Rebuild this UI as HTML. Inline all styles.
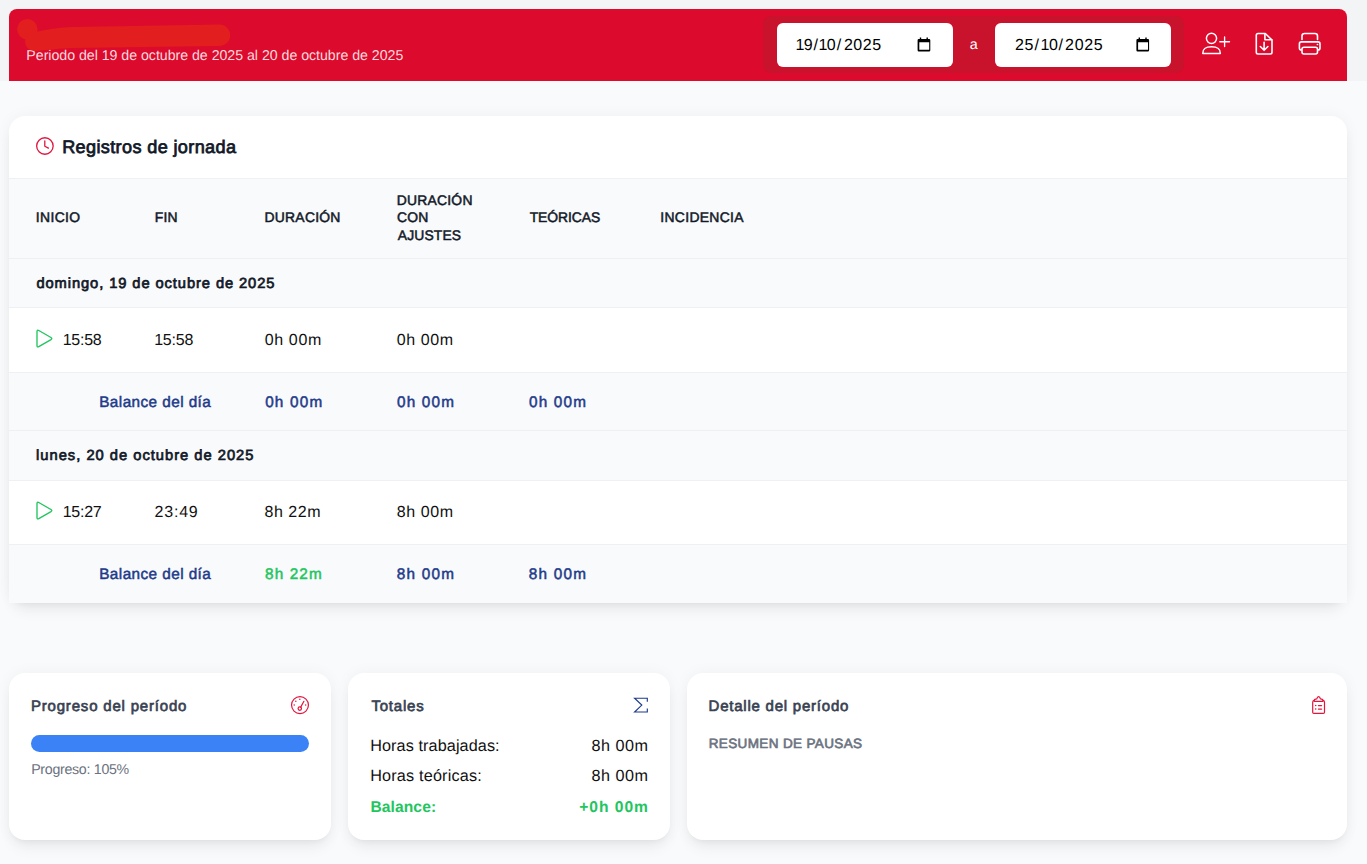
<!DOCTYPE html>
<html><head><meta charset="utf-8"><style>
*{margin:0;padding:0;box-sizing:border-box}
html,body{width:1367px;height:864px;overflow:hidden;background:#f9fafb;font-family:"Liberation Sans", sans-serif;position:relative}
.t{position:absolute;white-space:nowrap;line-height:1;font-family:"Liberation Sans", sans-serif;text-rendering:geometricPrecision}
.abs{position:absolute}
.ov{position:absolute;left:0;top:0;pointer-events:none}
.topband{position:absolute;left:0;top:0;width:1367px;height:81px;background:#f3f4f6}
.hdr{position:absolute;left:9px;top:9px;width:1338px;height:72px;background:#dc0a2d;border-radius:8px 8px 0 0}
.dc{position:absolute;left:763px;top:16px;width:421px;height:57px;background:#c9122b;border-radius:8px}
.inp{position:absolute;top:23px;width:176px;height:44px;background:#fff;border-radius:6px}
.card{position:absolute;background:#fff;border-radius:16px;box-shadow:0 0 16px rgba(0,0,0,.045),0 10px 15px -3px rgba(0,0,0,.06),0 4px 6px -4px rgba(0,0,0,.06)}
.row{position:absolute;left:9px;width:1338px}
.g{background:#f9fafb}
.b{position:absolute;left:9px;width:1338px;height:1px;background:#eef0f3}
.bar{position:absolute;left:31px;top:735px;width:278px;height:17px;background:#3b82f6;border-radius:9px}
</style></head><body>
<div class="topband"></div>
<div class="hdr"></div>
<div class="dc"></div>
<div class="inp" style="left:777px"></div>
<div class="inp" style="left:995px"></div>
<div class="card" style="left:9px;top:116px;width:1338px;height:487px"></div>
<div class="row g" style="top:179px;height:79px"></div>
<div class="row g" style="top:259px;height:48px"></div>
<div class="row g" style="top:373px;height:57px"></div>
<div class="row g" style="top:431px;height:49px"></div>
<div class="row g" style="top:545px;height:58px"></div>
<div class="b" style="top:178px"></div>
<div class="b" style="top:258px"></div>
<div class="b" style="top:307px"></div>
<div class="b" style="top:372px"></div>
<div class="b" style="top:430px"></div>
<div class="b" style="top:480px"></div>
<div class="b" style="top:544px"></div>
<div class="card" style="left:9px;top:673px;width:322px;height:167px"></div>
<div class="card" style="left:348px;top:673px;width:322px;height:167px"></div>
<div class="card" style="left:687px;top:673px;width:660px;height:167px"></div>
<div class="bar"></div>
<div class="t" style="left:26.36px;top:49px;font-size:14.2px;font-weight:400;color:#fcdade;letter-spacing:-0.030px">Periodo del 19 de octubre de 2025 al 20 de octubre de 2025</div>
<div class="t" style="left:795.40px;top:38px;font-size:16.0px;font-weight:400;color:#000;letter-spacing:-0.640px">19</div>
<div class="t" style="left:813.40px;top:38px;font-size:16.0px;font-weight:400;color:#000;letter-spacing:0.000px">/</div>
<div class="t" style="left:818.45px;top:38px;font-size:16.0px;font-weight:400;color:#000;letter-spacing:-0.500px">10</div>
<div class="t" style="left:836.80px;top:38px;font-size:16.0px;font-weight:400;color:#000;letter-spacing:0.000px">/</div>
<div class="t" style="left:843.90px;top:38px;font-size:16.0px;font-weight:400;color:#000;letter-spacing:0.580px">2025</div>
<div class="t" style="left:1015.00px;top:38px;font-size:16.0px;font-weight:400;color:#000;letter-spacing:0.680px">25</div>
<div class="t" style="left:1034.60px;top:38px;font-size:16.0px;font-weight:400;color:#000;letter-spacing:0.000px">/</div>
<div class="t" style="left:1040.60px;top:38px;font-size:16.0px;font-weight:400;color:#000;letter-spacing:-0.500px">10</div>
<div class="t" style="left:1058.60px;top:38px;font-size:16.0px;font-weight:400;color:#000;letter-spacing:0.000px">/</div>
<div class="t" style="left:1065.10px;top:38px;font-size:16.0px;font-weight:400;color:#000;letter-spacing:0.647px">2025</div>
<div class="t" style="left:969.82px;top:38px;font-size:14.4px;font-weight:400;color:#ffffff;letter-spacing:0.000px">a</div>
<div class="t" style="left:62.13px;top:138px;font-size:18.1px;font-weight:400;color:#111827;letter-spacing:0.364px;-webkit-text-stroke:0.75px #111827">Registros de jornada</div>
<div class="t" style="left:35.80px;top:211px;font-size:13.9px;font-weight:400;color:#111827;letter-spacing:0.382px;-webkit-text-stroke:0.5px #111827">INICIO</div>
<div class="t" style="left:154.74px;top:211px;font-size:13.9px;font-weight:400;color:#111827;letter-spacing:0.272px;-webkit-text-stroke:0.5px #111827">FIN</div>
<div class="t" style="left:264.54px;top:211px;font-size:13.9px;font-weight:400;color:#111827;letter-spacing:0.248px;-webkit-text-stroke:0.5px #111827">DURACIÓN</div>
<div class="t" style="left:396.64px;top:194px;font-size:13.9px;font-weight:400;color:#111827;letter-spacing:0.248px;-webkit-text-stroke:0.5px #111827">DURACIÓN</div>
<div class="t" style="left:397.06px;top:211px;font-size:13.9px;font-weight:400;color:#111827;letter-spacing:0.124px;-webkit-text-stroke:0.5px #111827">CON</div>
<div class="t" style="left:397.75px;top:229px;font-size:13.9px;font-weight:400;color:#111827;letter-spacing:0.129px;-webkit-text-stroke:0.5px #111827">AJUSTES</div>
<div class="t" style="left:529.67px;top:211px;font-size:13.9px;font-weight:400;color:#111827;letter-spacing:-0.061px;-webkit-text-stroke:0.5px #111827">TEÓRICAS</div>
<div class="t" style="left:660.30px;top:211px;font-size:13.9px;font-weight:400;color:#111827;letter-spacing:0.331px;-webkit-text-stroke:0.5px #111827">INCIDENCIA</div>
<div class="t" style="left:36.46px;top:277px;font-size:14.7px;font-weight:400;color:#111827;letter-spacing:0.914px;-webkit-text-stroke:0.7px #111827">domingo, 19 de octubre de 2025</div>
<div class="t" style="left:62.70px;top:333px;font-size:16.0px;font-weight:400;color:#111111;letter-spacing:-0.240px">15:58</div>
<div class="t" style="left:154.20px;top:333px;font-size:16.0px;font-weight:400;color:#111111;letter-spacing:-0.215px">15:58</div>
<div class="t" style="left:264.66px;top:333px;font-size:16.0px;font-weight:400;color:#111111;letter-spacing:0.648px">0h 00m</div>
<div class="t" style="left:396.86px;top:333px;font-size:16.0px;font-weight:400;color:#111111;letter-spacing:0.588px">0h 00m</div>
<div class="t" style="left:99.23px;top:395px;font-size:15.3px;font-weight:400;color:#1e3a8a;letter-spacing:0.438px;-webkit-text-stroke:0.5px #1e3a8a">Balance del día</div>
<div class="t" style="left:265.14px;top:395px;font-size:15.3px;font-weight:400;color:#1e3a8a;letter-spacing:1.221px;-webkit-text-stroke:0.5px #1e3a8a">0h 00m</div>
<div class="t" style="left:396.94px;top:395px;font-size:15.3px;font-weight:400;color:#1e3a8a;letter-spacing:1.221px;-webkit-text-stroke:0.5px #1e3a8a">0h 00m</div>
<div class="t" style="left:528.94px;top:395px;font-size:15.3px;font-weight:400;color:#1e3a8a;letter-spacing:1.221px;-webkit-text-stroke:0.5px #1e3a8a">0h 00m</div>
<div class="t" style="left:36.09px;top:449px;font-size:14.7px;font-weight:400;color:#111827;letter-spacing:1.004px;-webkit-text-stroke:0.7px #111827">lunes, 20 de octubre de 2025</div>
<div class="t" style="left:62.70px;top:505px;font-size:16.0px;font-weight:400;color:#111111;letter-spacing:-0.250px">15:27</div>
<div class="t" style="left:154.60px;top:505px;font-size:16.0px;font-weight:400;color:#111111;letter-spacing:0.780px">23:49</div>
<div class="t" style="left:264.58px;top:505px;font-size:16.0px;font-weight:400;color:#111111;letter-spacing:0.504px">8h 22m</div>
<div class="t" style="left:396.78px;top:505px;font-size:16.0px;font-weight:400;color:#111111;letter-spacing:0.604px">8h 00m</div>
<div class="t" style="left:99.23px;top:567px;font-size:15.3px;font-weight:400;color:#1e3a8a;letter-spacing:0.438px;-webkit-text-stroke:0.5px #1e3a8a">Balance del día</div>
<div class="t" style="left:265.06px;top:567px;font-size:15.3px;font-weight:400;color:#22c55e;letter-spacing:1.116px;-webkit-text-stroke:0.5px #22c55e">8h 22m</div>
<div class="t" style="left:396.86px;top:567px;font-size:15.3px;font-weight:400;color:#1e3a8a;letter-spacing:1.236px;-webkit-text-stroke:0.5px #1e3a8a">8h 00m</div>
<div class="t" style="left:528.86px;top:567px;font-size:15.3px;font-weight:400;color:#1e3a8a;letter-spacing:1.236px;-webkit-text-stroke:0.5px #1e3a8a">8h 00m</div>
<div class="t" style="left:30.93px;top:699px;font-size:15.0px;font-weight:400;color:#374151;letter-spacing:0.813px;-webkit-text-stroke:0.65px #374151">Progreso del período</div>
<div class="t" style="left:31.16px;top:763px;font-size:14.2px;font-weight:400;color:#6b7280;letter-spacing:-0.283px">Progreso: 105%</div>
<div class="t" style="left:371.42px;top:699px;font-size:15.0px;font-weight:400;color:#374151;letter-spacing:0.804px;-webkit-text-stroke:0.65px #374151">Totales</div>
<div class="t" style="left:370.20px;top:738px;font-size:16.2px;font-weight:400;color:#111111;letter-spacing:0.102px">Horas trabajadas:</div>
<div class="t" style="left:591.47px;top:738px;font-size:16.2px;font-weight:400;color:#111111;letter-spacing:0.495px">8h 00m</div>
<div class="t" style="left:370.20px;top:768px;font-size:16.2px;font-weight:400;color:#111111;letter-spacing:0.192px">Horas teóricas:</div>
<div class="t" style="left:591.47px;top:768px;font-size:16.2px;font-weight:400;color:#111111;letter-spacing:0.495px">8h 00m</div>
<div class="t" style="left:370.39px;top:800px;font-size:15.6px;font-weight:700;color:#22c55e;letter-spacing:0.103px">Balance:</div>
<div class="t" style="left:579.28px;top:800px;font-size:15.6px;font-weight:700;color:#22c55e;letter-spacing:0.965px">+0h 00m</div>
<div class="t" style="left:708.62px;top:699px;font-size:15.0px;font-weight:400;color:#374151;letter-spacing:0.768px;-webkit-text-stroke:0.65px #374151">Detalle del período</div>
<div class="t" style="left:708.75px;top:737px;font-size:13.5px;font-weight:400;color:#6b7280;letter-spacing:0.359px;-webkit-text-stroke:0.65px #6b7280">RESUMEN DE PAUSAS</div>

<svg class="ov" width="1367" height="864" viewBox="0 0 1367 864" fill="none" stroke-linecap="round" stroke-linejoin="round">
 <!-- scribble -->
 <g stroke="#e31e1e" fill="#e31e1e">
  <circle cx="27.3" cy="29.3" r="10.2" stroke="none"/>
  <path stroke="none" d="M34.5 32 C50 29 60 27.2 72 26.9 L219.5 24.6 A10.7 10.7 0 0 1 219.5 46 L72 48 C60 48.5 50 49.8 34.5 51 A9.5 9.5 0 0 1 34.5 32 Z"/>
 </g>
 <!-- user plus -->
 <g stroke="#fff" stroke-width="1.5">
  <circle cx="1211.5" cy="38.3" r="5.1"/>
  <path d="M1202.75 53.5 C1202.75 48 1206 46.75 1211.5 46.75 C1217 46.75 1220.35 48 1220.35 53.5 Z"/>
  <path d="M1219.8 41.7 H1229.5 M1224.6 37 V46.5" stroke-width="1.35"/>
 </g>
 <!-- file down -->
 <g stroke="#fff" stroke-width="1.6">
  <path d="M1265.3 33.5 H1258 Q1256.3 33.5 1256.3 35.2 V52.3 Q1256.3 54 1258 54 H1270.3 Q1272 54 1272 52.3 V40 Z"/>
  <path d="M1264.9 33.8 V39.8 H1271.8"/>
  <path d="M1264.1 42.3 V50.3 M1260.3 46.5 L1264.1 50.3 L1267.9 46.5"/>
 </g>
 <!-- printer -->
 <g stroke="#fff" stroke-width="1.6">
  <path d="M1302 39.5 V36 Q1302 33.5 1304.5 33.5 H1315 Q1317.5 33.5 1317.5 36 V39.5"/>
  <path d="M1301.2 49.9 H1301.4 Q1299.4 49.9 1299.4 47.9 V43.9 Q1299.4 41.9 1301.4 41.9 H1318 Q1320 41.9 1320 43.9 V47.9 Q1320 49.9 1318 49.9 H1318.2"/>
  <path d="M1304 47.2 H1315.5 Q1317.5 47.2 1317.5 49.2 V52 Q1317.5 54 1315.5 54 H1304 Q1302 54 1302 52 V49.2 Q1302 47.2 1304 47.2 Z"/>
  <circle cx="1317.3" cy="44.5" r="0.4" stroke-width="1"/>
 </g>
 <!-- calendar icons (chrome picker) -->
 <g fill="#000" stroke="none">
  <path d="M919.8 37.5 h1.4 v1.5 h5.3 v-1.5 h1.4 v1.5 h1.2 q1.2 0 1.2 1.2 v10 q0 1.3 -1.2 1.3 h-10.3 q-1.2 0 -1.2 -1.3 v-10 q0 -1.2 1.2 -1.2 h1 z M919.3 42.3 v7.5 h9.9 v-7.5 z"/>
  <path d="M1138.6 37.5 h1.4 v1.5 h5.3 v-1.5 h1.4 v1.5 h1.2 q1.2 0 1.2 1.2 v10 q0 1.3 -1.2 1.3 h-10.3 q-1.2 0 -1.2 -1.3 v-10 q0 -1.2 1.2 -1.2 h1 z M1138.1 42.3 v7.5 h9.9 v-7.5 z"/>
 </g>
 <!-- clock -->
 <g stroke="#e0163e" stroke-width="1.3">
  <circle cx="44.9" cy="146" r="8.25"/>
  <path d="M44.8 141 V146.2 L48.4 148.1"/>
 </g>
 <!-- play icons -->
 <g stroke="#22c55e" stroke-width="1.35">
  <path d="M37 331.6 Q37 329.6 38.8 330.5 L51 337.5 Q52.6 338.6 51 339.6 L38.8 346.6 Q37 347.6 37 345.6 Z"/>
  <path transform="translate(0,172)" d="M37 331.6 Q37 329.6 38.8 330.5 L51 337.5 Q52.6 338.6 51 339.6 L38.8 346.6 Q37 347.6 37 345.6 Z"/>
 </g>
 <!-- gauge -->
 <g stroke="#e0163e" stroke-width="1.2">
  <circle cx="300" cy="705.1" r="8.45"/>
  <circle cx="299.8" cy="708.6" r="1.7"/>
  <path d="M300.7 707.1 L303.9 701.3"/>
 </g>
 <g fill="#e0163e" stroke="none">
  <circle cx="299.8" cy="699.3" r="0.75"/><circle cx="295.8" cy="701.2" r="0.75"/>
  <circle cx="294.2" cy="705" r="0.75"/><circle cx="305.7" cy="705" r="0.75"/>
 </g>
 <!-- sigma -->
 <g stroke="#1e3a8a" stroke-width="1.15" stroke-linecap="butt" stroke-linejoin="miter">
  <path d="M647.3 701.7 V698.2 H634.6 L641.8 705.1 L634.6 712 H647.3 V708.6"/>
 </g>
 <!-- clipboard -->
 <g stroke="#e0163e" stroke-width="1.2">
  <path d="M1314.2 700.3 Q1312.7 700.6 1312.7 702.2 V712.3 Q1312.7 713.4 1313.8 713.4 H1323.3 Q1324.5 713.4 1324.5 712.3 V702.2 Q1324.5 700.6 1323 700.3"/>
  <path d="M1314.4 701.3 L1314.2 700.2 Q1314.3 699.3 1315.6 699.1 L1316.8 698.9 Q1317.3 696.6 1318.6 696.6 Q1319.9 696.6 1320.4 698.9 L1321.6 699.1 Q1322.9 699.3 1323 700.2 L1322.8 701.3 Z"/>
  <path d="M1318.4 705.6 H1321.6 M1318.4 709.1 H1321.6"/>
  <path d="M1315.7 705.6 h0.05 M1315.7 709.1 h0.05" stroke-width="1.5"/>
 </g>
</svg>
</body></html>
